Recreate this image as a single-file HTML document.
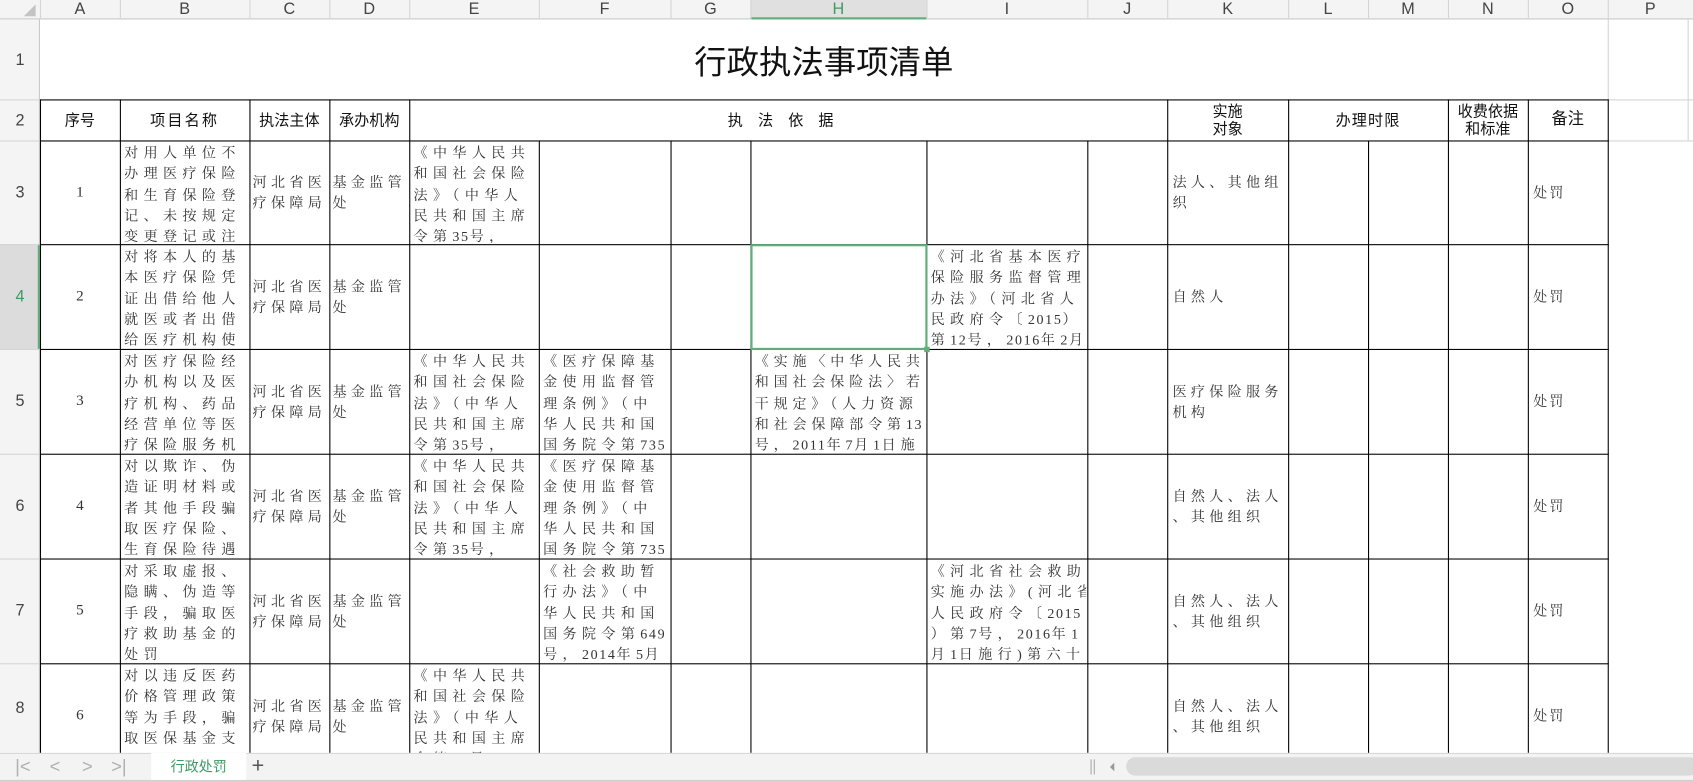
<!DOCTYPE html>
<html><head><meta charset="utf-8">
<style>
html,body{margin:0;padding:0;background:#fff;overflow:hidden;width:1693px;height:781px}
#w{position:absolute;left:0;top:0;width:1568px;height:723px;transform:scale(1.07972,1.08022);transform-origin:0 0;font-family:"Liberation Sans","Noto Sans CJK SC",sans-serif;overflow:hidden}
.a{position:absolute}
.hl{position:absolute;height:1px;background:#000}
.vl{position:absolute;width:1px;background:#000}
.gh{position:absolute;height:1px;background:#d4d4d4}
.gv{position:absolute;width:1px;background:#d4d4d4}
.t{position:absolute;overflow:hidden;font-family:"Liberation Serif","Noto Serif CJK SC",serif;font-size:13px;color:#333;letter-spacing:5px;line-height:19.3px;white-space:pre}
.m{position:absolute;display:flex;align-items:center;overflow:hidden;font-family:"Liberation Serif","Noto Serif CJK SC",serif;font-size:13px;color:#333;line-height:19px;white-space:pre}
.d{letter-spacing:1.5px}
.ch{position:absolute;top:0;height:18px;font-size:15px;color:#444;text-align:center;line-height:18px}
.rh{position:absolute;left:0;width:37px;font-size:15px;color:#444;display:flex;align-items:center;justify-content:center}
.h{position:absolute;top:92px;height:38px;display:flex;align-items:center;justify-content:center;font-size:14px;color:#111;text-align:center;line-height:16px}
</style></head><body><div id="w">
<div class="a" style="left:0;top:0;width:1568px;height:18px;background:#f4f4f4;border-bottom:1px solid #c8c8c8;box-sizing:border-box"></div>
<div class="a" style="left:695px;top:0;width:163px;height:18px;background:#e0e0e0;border-bottom:2px solid #5fae7c;box-sizing:border-box"></div>
<div class="a" style="left:0;top:0;width:37px;height:18px"><div style="position:absolute;right:4px;bottom:3px;width:0;height:0;border-left:11px solid transparent;border-bottom:11px solid #c4c4c4"></div></div>
<div class="ch" style="left:37px;width:74px">A</div><div class="ch" style="left:111px;width:120px">B</div><div class="ch" style="left:231px;width:74px">C</div><div class="ch" style="left:305px;width:74px">D</div><div class="ch" style="left:379px;width:120px">E</div><div class="ch" style="left:499px;width:122px">F</div><div class="ch" style="left:621px;width:74px">G</div><div class="ch" style="left:695px;width:163px;color:#3f9a62">H</div><div class="ch" style="left:858px;width:149px">I</div><div class="ch" style="left:1007px;width:74px">J</div><div class="ch" style="left:1081px;width:112px">K</div><div class="ch" style="left:1193px;width:74px">L</div><div class="ch" style="left:1267px;width:74px">M</div><div class="ch" style="left:1341px;width:74px">N</div><div class="ch" style="left:1415px;width:74px">O</div><div class="ch" style="left:1489px;width:79px">P</div>
<div class="gv" style="left:37px;top:0;height:18px"></div><div class="gv" style="left:111px;top:0;height:18px"></div><div class="gv" style="left:231px;top:0;height:18px"></div><div class="gv" style="left:305px;top:0;height:18px"></div><div class="gv" style="left:379px;top:0;height:18px"></div><div class="gv" style="left:499px;top:0;height:18px"></div><div class="gv" style="left:621px;top:0;height:18px"></div><div class="gv" style="left:695px;top:0;height:18px"></div><div class="gv" style="left:858px;top:0;height:18px"></div><div class="gv" style="left:1007px;top:0;height:18px"></div><div class="gv" style="left:1081px;top:0;height:18px"></div><div class="gv" style="left:1193px;top:0;height:18px"></div><div class="gv" style="left:1267px;top:0;height:18px"></div><div class="gv" style="left:1341px;top:0;height:18px"></div><div class="gv" style="left:1415px;top:0;height:18px"></div><div class="gv" style="left:1489px;top:0;height:18px"></div>
<div class="a" style="left:0;top:18px;width:37px;height:679px;background:#f4f4f4;border-right:1px solid #c8c8c8;box-sizing:border-box"></div>
<div class="a" style="left:0;top:226px;width:37px;height:97px;background:#dcdcdc;border-right:2px solid #5fae7c;box-sizing:border-box"></div>
<div class="rh" style="top:18px;height:74px">1</div><div class="rh" style="top:92px;height:38px">2</div><div class="rh" style="top:130px;height:96px">3</div><div class="rh" style="top:226px;height:97px;color:#3f9a62">4</div><div class="rh" style="top:323px;height:97px">5</div><div class="rh" style="top:420px;height:97px">6</div><div class="rh" style="top:517px;height:97px">7</div><div class="rh" style="top:614px;height:83px">8</div>
<div class="gh" style="left:0;top:92px;width:37px"></div><div class="gh" style="left:0;top:130px;width:37px"></div><div class="gh" style="left:0;top:226px;width:37px"></div><div class="gh" style="left:0;top:323px;width:37px"></div><div class="gh" style="left:0;top:420px;width:37px"></div><div class="gh" style="left:0;top:517px;width:37px"></div><div class="gh" style="left:0;top:614px;width:37px"></div>
<div class="gv" style="left:1489px;top:18px;height:74px"></div><div class="gv" style="left:1563px;top:18px;height:112px"></div>
<div class="gh" style="left:1489px;top:92px;width:79px"></div><div class="gh" style="left:1489px;top:130px;width:79px"></div>
<div class="a" style="left:37px;top:18px;width:1452px;height:74px;display:flex;align-items:center;justify-content:center;font-size:30px;color:#111">行政执法事项清单</div>
<div class="hl" style="left:37px;top:92px;width:1453px"></div><div class="hl" style="left:37px;top:130px;width:1453px"></div><div class="hl" style="left:37px;top:226px;width:1453px"></div><div class="hl" style="left:37px;top:323px;width:1453px"></div><div class="hl" style="left:37px;top:420px;width:1453px"></div><div class="hl" style="left:37px;top:517px;width:1453px"></div><div class="hl" style="left:37px;top:614px;width:1453px"></div>
<div class="vl" style="left:37px;top:92px;height:605px"></div><div class="vl" style="left:111px;top:92px;height:605px"></div><div class="vl" style="left:231px;top:92px;height:605px"></div><div class="vl" style="left:305px;top:92px;height:605px"></div><div class="vl" style="left:379px;top:92px;height:605px"></div><div class="vl" style="left:1081px;top:92px;height:605px"></div><div class="vl" style="left:1193px;top:92px;height:605px"></div><div class="vl" style="left:1341px;top:92px;height:605px"></div><div class="vl" style="left:1415px;top:92px;height:605px"></div><div class="vl" style="left:1489px;top:92px;height:605px"></div>
<div class="vl" style="left:499px;top:130px;height:567px"></div><div class="vl" style="left:621px;top:130px;height:567px"></div><div class="vl" style="left:695px;top:130px;height:567px"></div><div class="vl" style="left:858px;top:130px;height:567px"></div><div class="vl" style="left:1007px;top:130px;height:567px"></div><div class="vl" style="left:1267px;top:130px;height:567px"></div>
<div class="a" style="left:695px;top:226px;width:164px;height:98px;border:2px solid #5fae7c;box-sizing:border-box"></div>
<div class="a" style="left:856px;top:321px;width:5px;height:5px;background:#5fae7c"></div>
<div class="h" style="left:37px;width:74px">序号</div><div class="h" style="left:111px;width:120px;letter-spacing:2px">项目名称</div><div class="h" style="left:231px;width:74px">执法主体</div><div class="h" style="left:305px;width:74px">承办机构</div><div class="h" style="left:379px;width:702px;letter-spacing:14px">执法依据</div><div class="h" style="left:1081px;width:112px">实施<br>对象</div><div class="h" style="left:1193px;width:148px;letter-spacing:1px">办理时限</div><div class="h" style="left:1341px;width:74px">收费依据<br>和标准</div><div class="h" style="left:1415px;width:74px;font-size:15px">备注</div>
<div class="m" style="left:37px;top:130px;width:74px;height:96px;justify-content:center;font-size:14px">1</div><div class="m" style="left:37px;top:226px;width:74px;height:97px;justify-content:center;font-size:14px">2</div><div class="m" style="left:37px;top:323px;width:74px;height:97px;justify-content:center;font-size:14px">3</div><div class="m" style="left:37px;top:420px;width:74px;height:97px;justify-content:center;font-size:14px">4</div><div class="m" style="left:37px;top:517px;width:74px;height:97px;justify-content:center;font-size:14px">5</div><div class="m" style="left:37px;top:614px;width:74px;height:97px;justify-content:center;font-size:14px">6</div>
<div class="t" style="left:115px;top:132px;width:115px;height:93px">对用人单位不
办理医疗保险
和生育保险登
记、未按规定
变更登记或注</div>
<div class="t" style="left:115px;top:228px;width:115px;height:94px">对将本人的基
本医疗保险凭
证出借给他人
就医或者出借
给医疗机构使</div>
<div class="t" style="left:115px;top:325px;width:115px;height:94px">对医疗保险经
办机构以及医
疗机构、药品
经营单位等医
疗保险服务机</div>
<div class="t" style="left:115px;top:422px;width:115px;height:94px">对以欺诈、伪
造证明材料或
者其他手段骗
取医疗保险、
生育保险待遇</div>
<div class="t" style="left:115px;top:519px;width:115px;height:94px">对采取虚报、
隐瞒、伪造等
手段，骗取医
疗救助基金的
处罚</div>
<div class="t" style="left:115px;top:616px;width:115px;height:81px">对以违反医药
价格管理政策
等为手段，骗
取医保基金支</div>
<div class="m" style="left:234px;top:130px;width:70px;height:96px;letter-spacing:4px">河北省医
疗保障局</div><div class="m" style="left:308px;top:130px;width:70px;height:96px;letter-spacing:4px">基金监管
处</div>
<div class="m" style="left:234px;top:226px;width:70px;height:97px;letter-spacing:4px">河北省医
疗保障局</div><div class="m" style="left:308px;top:226px;width:70px;height:97px;letter-spacing:4px">基金监管
处</div>
<div class="m" style="left:234px;top:323px;width:70px;height:97px;letter-spacing:4px">河北省医
疗保障局</div><div class="m" style="left:308px;top:323px;width:70px;height:97px;letter-spacing:4px">基金监管
处</div>
<div class="m" style="left:234px;top:420px;width:70px;height:97px;letter-spacing:4px">河北省医
疗保障局</div><div class="m" style="left:308px;top:420px;width:70px;height:97px;letter-spacing:4px">基金监管
处</div>
<div class="m" style="left:234px;top:517px;width:70px;height:97px;letter-spacing:4px">河北省医
疗保障局</div><div class="m" style="left:308px;top:517px;width:70px;height:97px;letter-spacing:4px">基金监管
处</div>
<div class="m" style="left:234px;top:614px;width:70px;height:97px;letter-spacing:4px">河北省医
疗保障局</div><div class="m" style="left:308px;top:614px;width:70px;height:97px;letter-spacing:4px">基金监管
处</div>
<div class="t" style="left:383px;top:132px;width:115px;height:93px">《中华人民共
和国社会保险
法》（中华人
民共和国主席
令第<span class="d">35</span>号，</div>
<div class="t" style="left:383px;top:325px;width:115px;height:94px">《中华人民共
和国社会保险
法》（中华人
民共和国主席
令第<span class="d">35</span>号，</div>
<div class="t" style="left:383px;top:422px;width:115px;height:94px">《中华人民共
和国社会保险
法》（中华人
民共和国主席
令第<span class="d">35</span>号，</div>
<div class="t" style="left:383px;top:616px;width:115px;height:81px">《中华人民共
和国社会保险
法》（中华人
民共和国主席
令第<span class="d">35</span>号，</div>
<div class="t" style="left:503px;top:325px;width:117px;height:94px">《医疗保障基
金使用监督管
理条例》（中
华人民共和国
国务院令第<span class="d">735</span></div>
<div class="t" style="left:503px;top:422px;width:117px;height:94px">《医疗保障基
金使用监督管
理条例》（中
华人民共和国
国务院令第<span class="d">735</span></div>
<div class="t" style="left:503px;top:519px;width:117px;height:94px">《社会救助暂
行办法》（中
华人民共和国
国务院令第<span class="d">649</span>
号，<span class="d">2014</span>年<span class="d">5</span>月</div>
<div class="t" style="left:699px;top:325px;width:158px;height:94px;letter-spacing:4.5px">《实施〈中华人民共
和国社会保险法〉若
干规定》（人力资源
和社会保障部令第<span class="d">13</span>
号，<span class="d">2011</span>年<span class="d">7</span>月<span class="d">1</span>日施</div>
<div class="t" style="left:862px;top:228px;width:144px;height:94px;letter-spacing:5px">《河北省基本医疗
保险服务监督管理
办法》（河北省人
民政府令〔<span class="d">2015</span>）
第<span class="d">12</span>号，<span class="d">2016</span>年<span class="d">2</span>月</div>
<div class="t" style="left:862px;top:519px;width:144px;height:94px;letter-spacing:5px">《河北省社会救助
实施办法》(河北省
人民政府令〔<span class="d">2015</span>
）第<span class="d">7</span>号，<span class="d">2016</span>年<span class="d">1</span>
月<span class="d">1</span>日施行)第六十</div>
<div class="m" style="left:1086px;top:130px;width:106px;height:96px;letter-spacing:4px">法人、其他组
织</div>
<div class="m" style="left:1086px;top:226px;width:106px;height:97px;letter-spacing:4px">自然人</div>
<div class="m" style="left:1086px;top:323px;width:106px;height:97px;letter-spacing:4px">医疗保险服务
机构</div>
<div class="m" style="left:1086px;top:420px;width:106px;height:97px;letter-spacing:4px">自然人、法人
、其他组织</div>
<div class="m" style="left:1086px;top:517px;width:106px;height:97px;letter-spacing:4px">自然人、法人
、其他组织</div>
<div class="m" style="left:1086px;top:614px;width:106px;height:97px;letter-spacing:4px">自然人、法人
、其他组织</div>
<div class="m" style="left:1420px;top:130px;width:68px;height:96px;letter-spacing:2px">处罚</div><div class="m" style="left:1420px;top:226px;width:68px;height:97px;letter-spacing:2px">处罚</div><div class="m" style="left:1420px;top:323px;width:68px;height:97px;letter-spacing:2px">处罚</div><div class="m" style="left:1420px;top:420px;width:68px;height:97px;letter-spacing:2px">处罚</div><div class="m" style="left:1420px;top:517px;width:68px;height:97px;letter-spacing:2px">处罚</div><div class="m" style="left:1420px;top:614px;width:68px;height:97px;letter-spacing:2px">处罚</div>
<div class="a" style="left:0;top:697px;width:1568px;height:26px;background:#f3f3f3;border-top:1px solid #d8d8d8;box-sizing:border-box"></div>
<div class="a" style="left:0;top:722px;width:1568px;height:1px;background:#d0d0d0"></div>
<div class="a" style="left:14px;top:698px;font-size:17px;color:#b0b0b0;line-height:24px">|&lt;</div>
<div class="a" style="left:46px;top:698px;font-size:17px;color:#b0b0b0;line-height:24px">&lt;</div>
<div class="a" style="left:76px;top:698px;font-size:17px;color:#b0b0b0;line-height:24px">&gt;</div>
<div class="a" style="left:103px;top:698px;font-size:17px;color:#b0b0b0;line-height:24px">&gt;|</div>
<div class="a" style="left:140px;top:697px;width:88px;height:25px;background:#fff;color:#3f9a62;font-size:13px;line-height:25px;text-align:center">行政处罚</div>
<div class="a" style="left:233px;top:697px;font-size:20px;color:#555;line-height:25px">+</div>
<div class="a" style="left:1010px;top:703px;width:1px;height:14px;background:#aaa"></div><div class="a" style="left:1013px;top:703px;width:1px;height:14px;background:#aaa"></div>
<div class="a" style="left:1028px;top:706px;width:0;height:0;border-top:4px solid transparent;border-bottom:4px solid transparent;border-right:4px solid #999"></div>
<div class="a" style="left:1043px;top:701px;width:530px;height:17px;background:#dadada;border-radius:9px"></div>
</div></body></html>
